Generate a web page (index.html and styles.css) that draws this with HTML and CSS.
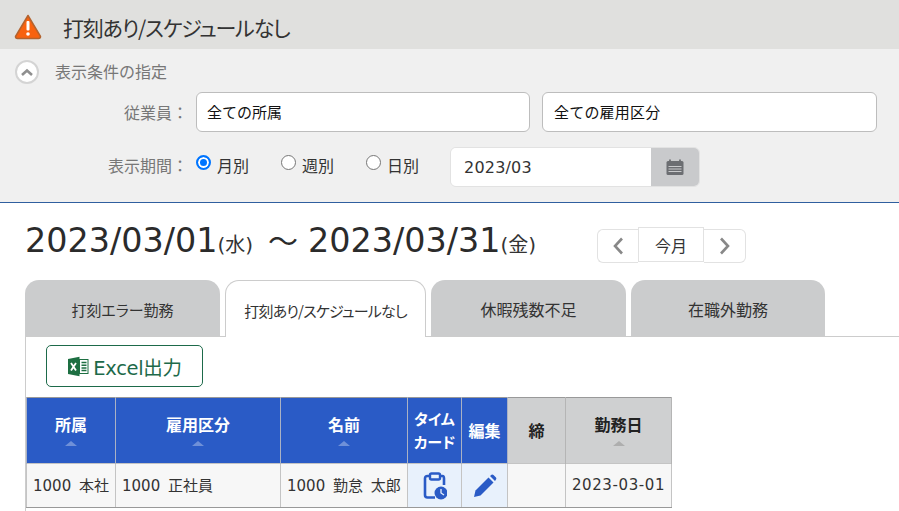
FILE: index.html
```html
<!DOCTYPE html>
<html lang="ja">
<head>
<meta charset="utf-8">
<title>打刻あり/スケジュールなし</title>
<link rel="stylesheet" href="styles.css">
</head>
<body>
<header class="title-bar">
  <svg class="warn-icon" width="28" height="26" viewBox="0 0 28 26"><path d="M14 1.500 L26.500 22.500 Q26.500 24.500 24.500 24.500 L3.500 24.500 Q1.500 24.500 1.500 22.500 Z" fill="#f8620f" stroke="#b3632f" stroke-width="1.500" stroke-linejoin="round"/><rect x="12.500" y="7" width="3" height="9.500" rx="1" fill="#fff"/><circle cx="14" cy="20" r="1.800" fill="#fff"/></svg>
  <h1 class="title">打刻あり/スケジュールなし</h1>
</header>
<section class="conditions">
  <div class="cond-head">
    <span class="toggle"><svg width="14" height="9" viewBox="0 0 14 9"><path d="M2 7 L7 2.500 L12 7" fill="none" stroke="#8f8f8f" stroke-width="2.600"/></svg></span>
    <span class="cond-title">表示条件の指定</span>
  </div>
  <div class="form-row row-emp">
    <span class="label">従業員：</span>
    <div class="select sel-a">全ての所属</div>
    <div class="select sel-b">全ての雇用区分</div>
  </div>
  <div class="form-row row-period">
    <span class="label">表示期間：</span>
    <span class="radio on"></span><span class="radio-text">月別</span>
    <span class="radio"></span><span class="radio-text">週別</span>
    <span class="radio"></span><span class="radio-text">日別</span>
    <div class="date-group">
      <span class="date-input">2023/03</span>
      <span class="date-btn"><svg width="18" height="17" viewBox="0 0 18 17"><path d="M4 0.500 V3 M14 0.500 V3" stroke="#6c6e72" stroke-width="1.800"/><rect x="0.500" y="2" width="17" height="14" rx="1.500" fill="#6c6e72"/><path d="M2.500 7.500 H15.500 M2.500 10 H15.500 M2.500 12.500 H15.500" stroke="#c9cacc" stroke-width="1"/></svg></span>
    </div>
  </div>
</section>
<main class="content">
  <div class="range-row">
    <div class="range"><span class="big">2023/03/01</span><span class="small">(水)</span><span class="big tilde">〜</span><span class="big">2023/03/31</span><span class="small">(金)</span></div>
    <div class="pager">
      <span class="pg pg-l"><svg width="12" height="20" viewBox="0 0 12 20"><path d="M10 2.500 L3 10 L10 17.500" fill="none" stroke="#888" stroke-width="2.600"/></svg></span>
      <span class="pg pg-m">今月</span>
      <span class="pg pg-r"><svg width="12" height="20" viewBox="0 0 12 20"><path d="M2 2.500 L9 10 L2 17.500" fill="none" stroke="#888" stroke-width="2.600"/></svg></span>
    </div>
  </div>
  <nav class="tabs">
    <span class="tab">打刻エラー勤務</span>
    <span class="tab active">打刻あり/スケジュールなし</span>
    <span class="tab">休暇残数不足</span>
    <span class="tab">在職外勤務</span>
  </nav>
  <div class="panel">
    <button class="excel">
      <svg width="22" height="21" viewBox="0 0 21 21"><path d="M0.500 3 L12 0.800 V20.200 L0.500 18 Z" fill="#1d6f42"/><rect x="12" y="3.500" width="8.500" height="14" fill="#fff" stroke="#1d6f42" stroke-width="1"/><path d="M14 6.500 H19 M14 9.200 H19 M14 11.900 H19 M14 14.600 H19" stroke="#1d6f42" stroke-width="1.500"/><path d="M3.500 7 L8.500 14.500 M8.500 7 L3.500 14.500" stroke="#fff" stroke-width="1.800"/></svg>
      <span>Excel出力</span>
    </button>
    <table class="grid">
      <colgroup>
        <col class="c1"><col class="c2"><col class="c3"><col class="c4"><col class="c5"><col class="c6"><col class="c7">
      </colgroup>
      <thead>
        <tr>
          <th class="blue sortable"><span class="th-t">所属</span><i class="sort"></i></th>
          <th class="blue sortable"><span class="th-t">雇用区分</span><i class="sort"></i></th>
          <th class="blue sortable"><span class="th-t">名前</span><i class="sort"></i></th>
          <th class="blue kana">タイム<br>カード</th>
          <th class="blue">編集</th>
          <th class="gray">締</th>
          <th class="gray sortable"><span class="th-t">勤務日</span><i class="sort dark"></i></th>
        </tr>
      </thead>
      <tbody>
        <tr>
          <td>1000 本社</td>
          <td>1000 正社員</td>
          <td>1000 勤怠 太郎</td>
          <td class="act"><svg width="24" height="28" viewBox="0 0 24 28"><path d="M7 4 H4.500 Q2 4 2 6.500 V23 Q2 25.500 4.500 25.500 H12 M17 4 H19.500 Q21 4 21 6.500 V13" fill="none" stroke="#2a5bc6" stroke-width="2.600"/><rect x="7" y="1.500" width="10" height="6" rx="1.500" fill="none" stroke="#2a5bc6" stroke-width="2.400"/><circle cx="18" cy="21" r="6.500" fill="#2a5bc6"/><path d="M18 17 V21 L21 23" fill="none" stroke="#e8f1fc" stroke-width="1.300"/></svg></td>
          <td class="act"><svg width="24" height="24" viewBox="0 0 24 24"><path d="M1 23 L2.500 16.500 L15.500 3.500 L20.500 8.500 L7.500 21.500 Z" fill="#2a5bc6"/><path d="M17 2 L18.500 0.800 Q19.500 0.200 20.500 1 L23 3.500 Q23.800 4.500 23 5.500 L22 7 Z" fill="#2a5bc6"/></svg></td>
          <td></td>
          <td class="ctr">2023-03-01</td>
        </tr>
      </tbody>
    </table>
  </div>
</main>
</body>
</html>
```
FILE: styles.css
```css
* { box-sizing: border-box; }
html, body { margin: 0; padding: 0; }
html { overflow: hidden; }
body {
  width: 899px;
  height: 511px;
  overflow: hidden;
  background: #fff;
  color: #222;
  font-family: "DejaVu Sans", "Noto Sans CJK JP", sans-serif;
  font-size: 15px;
}
.title-bar {
  height: 49px;
  background: #e0e0de;
  display: flex;
  align-items: center;
  padding-left: 14px;
  gap: 21px;
}
.warn-icon { margin-top: 4px; }
.title {
  margin: 4px 0 0;
  font-family: "Noto Sans CJK JP", sans-serif;
  font-size: 21px;
  font-weight: 400;
  color: #333;
  font-feature-settings: "palt";
  letter-spacing: -1.2px;
}
.conditions {
  height: 154px;
  background: #f0f0f0;
  border-bottom: 1px solid #2f5f9f;
  padding-top: 11px;
}
.cond-head { display: flex; align-items: center; gap: 16px; height: 24px; padding-left: 15px; }
.toggle {
  width: 24px;
  height: 24px;
  border-radius: 50%;
  background: #fff;
  border: 2px solid #d4d4d4;
  display: flex;
  align-items: center;
  justify-content: center;
}
.cond-title {
  font-family: "Noto Sans CJK JP", sans-serif;
  font-size: 16px;
  color: #777;
  margin-top: -2px;
}
.form-row { display: flex; align-items: center; }
.row-emp { margin-top: 8px; height: 40px; }
.row-period { margin-top: 15px; height: 40px; }
.label {
  width: 188px;
  margin-right: 8px;
  flex: none;
  text-align: right;
  font-family: "Noto Sans CJK JP", sans-serif;
  font-size: 16px;
  color: #777;
}
.row-period .label { margin-top: -4px; }
.select {
  height: 40px;
  background: #fff;
  border: 1px solid #bdbdbd;
  border-radius: 6px;
  line-height: 38px;
  padding-left: 10px;
  font-family: "Noto Sans CJK JP", sans-serif;
  font-size: 15px;
  color: #111;
}
.sel-a { width: 334px; margin-right: 12px; }
.sel-b { width: 335px; padding-left: 11px; letter-spacing: 0.2px; }
.radio {
  width: 15px;
  height: 15px;
  border-radius: 50%;
  background: #fff;
  border: 1px solid #767676;
  margin-top: -10px;
  flex: none;
}
.radio.on {
  border: 2px solid #0075ff;
  box-shadow: inset 0 0 0 2px #fff;
  background: #0075ff;
}
.radio-text {
  font-family: "Noto Sans CJK JP", sans-serif;
  font-size: 16px;
  color: #333;
  margin-top: -4px;
  margin-left: 6px;
  margin-right: 31px;
  width: 33px;
  flex: none;
}
.date-group {
  display: flex;
  height: 40px;
  width: 250px;
  border: 1px solid #e2e2e2;
  border-radius: 6px;
  overflow: hidden;
  margin-left: -1px;
}
.date-input {
  flex: 1;
  background: #fff;
  line-height: 40px;
  padding-left: 13px;
  font-size: 16px;
  letter-spacing: 0.2px;
  color: #333;
}
.date-btn {
  width: 48px;
  background: #c9cacc;
  display: flex;
  align-items: center;
  justify-content: center;
}
.content { padding-left: 25px; }
.range-row { display: flex; align-items: center; height: 76px; }
.range { width: 572px; display: flex; align-items: baseline; white-space: nowrap; }
.big { font-size: 33.4px; color: #2b2b2b; line-height: 1.2; }
.small { font-size: 20px; color: #333; }
.tilde { font-family: "Noto Sans CJK JP", sans-serif; margin: 0 10px 0 15px; font-size: 30px; }
.pager { display: flex; align-items: center; margin-top: 9px; }
.pg {
  background: #fff;
  border: 1px solid #e2e2e2;
  display: flex;
  align-items: center;
  justify-content: center;
  height: 34px;
  font-family: "Noto Sans CJK JP", sans-serif;
  font-size: 16px;
  color: #333;
}
.pg-l { width: 41px; border-radius: 6px 0 0 6px; border-right: 0; }
.pg-m { width: 66px; height: 35px; margin-top: -2px; }
.pg-r { width: 42px; border-radius: 0 6px 6px 0; border-left: 0; }
.tabs { display: flex; gap: 5px; height: 57px; margin-top: 1px; position: relative; z-index: 1; }
.tab {
  width: 195px;
  height: 56px;
  background: #cbcccd;
  border-radius: 14px 14px 0 0;
  display: flex;
  align-items: center;
  justify-content: center;
  padding-top: 2px;
  font-family: "Noto Sans CJK JP", sans-serif;
  font-size: 16px;
  font-feature-settings: "palt";
  color: #333;
}
.tab:first-child { font-size: 15px; }
.tab:last-child { width: 194px; }
.tab.active {
  width: 201px;
  height: 57px;
  background: #fff;
  border: 1px solid #ccc;
  border-bottom: 0;
  font-size: 15px;
  letter-spacing: -0.8px;
  white-space: nowrap;
}
.panel {
  border-top: 1px solid #ccc;
  border-left: 1px solid #ccc;
  margin-top: -1px;
  padding-top: 8px;
  height: 175px;
}
.excel {
  margin-left: 20px;
  width: 157px;
  height: 42px;
  background: #fff;
  border: 1px solid #1d6a4a;
  border-radius: 5px;
  display: flex;
  align-items: center;
  justify-content: center;
  gap: 4px;
  padding: 0;
  color: #1d6a4a;
  font-family: "DejaVu Sans", "Noto Sans CJK JP", sans-serif;
  font-size: 19.5px;
}
.excel span { letter-spacing: -0.3px; }
.grid {
  margin-top: 10px;
  border-collapse: collapse;
  table-layout: fixed;
  width: 645px;
  border-top: 1px solid #999;
}
.c1 { width: 89px; }
.c2 { width: 165px; }
.c3 { width: 127px; }
.c4 { width: 54px; }
.c5 { width: 46px; }
.c6 { width: 58px; }
.c7 { width: 106px; }
th {
  height: 66px;
  padding: 0;
  text-align: center;
  font-family: "Noto Sans CJK JP", sans-serif;
  font-size: 16px;
  font-weight: 700;
  line-height: 23px;
  border: 1px solid #aab2c4;
  border-top: 0;
  border-bottom: 0;
}
th.sortable { padding-top: 4px; }
th.kana { font-size: 15px; font-feature-settings: "palt"; white-space: nowrap; padding-bottom: 2px; }
th.blue { background: #2a5bc6; color: #fff; }
th.gray { background: #cfd0d1; color: #222; border-color: #b5b5b5; }
.th-t { display: block; margin-top: -7px; }
.sort {
  display: block;
  width: 0;
  height: 0;
  margin: 5px auto 0;
  border-left: 6px solid transparent;
  border-right: 6px solid transparent;
  border-bottom: 5px solid #6f90d8;
}
.sort.dark { border-bottom-color: #aeaeae; }
td {
  height: 44px;
  padding: 0 0 2px 6px;
  background: #f7f7f7;
  border: 1px solid #c4c4c4;
  border-bottom-color: #999;
  font-family: "DejaVu Sans", "Noto Sans CJK JP", sans-serif;
  font-size: 15px;
  word-spacing: 3px;
  color: #333;
  white-space: nowrap;
  overflow: hidden;
}
td.act { background: #e8f1fc; text-align: center; padding: 0; vertical-align: middle; }
td.act svg { display: block; margin: 0 auto; }
td.ctr { text-align: center; padding: 0 0 2px; letter-spacing: 0.6px; }
```
